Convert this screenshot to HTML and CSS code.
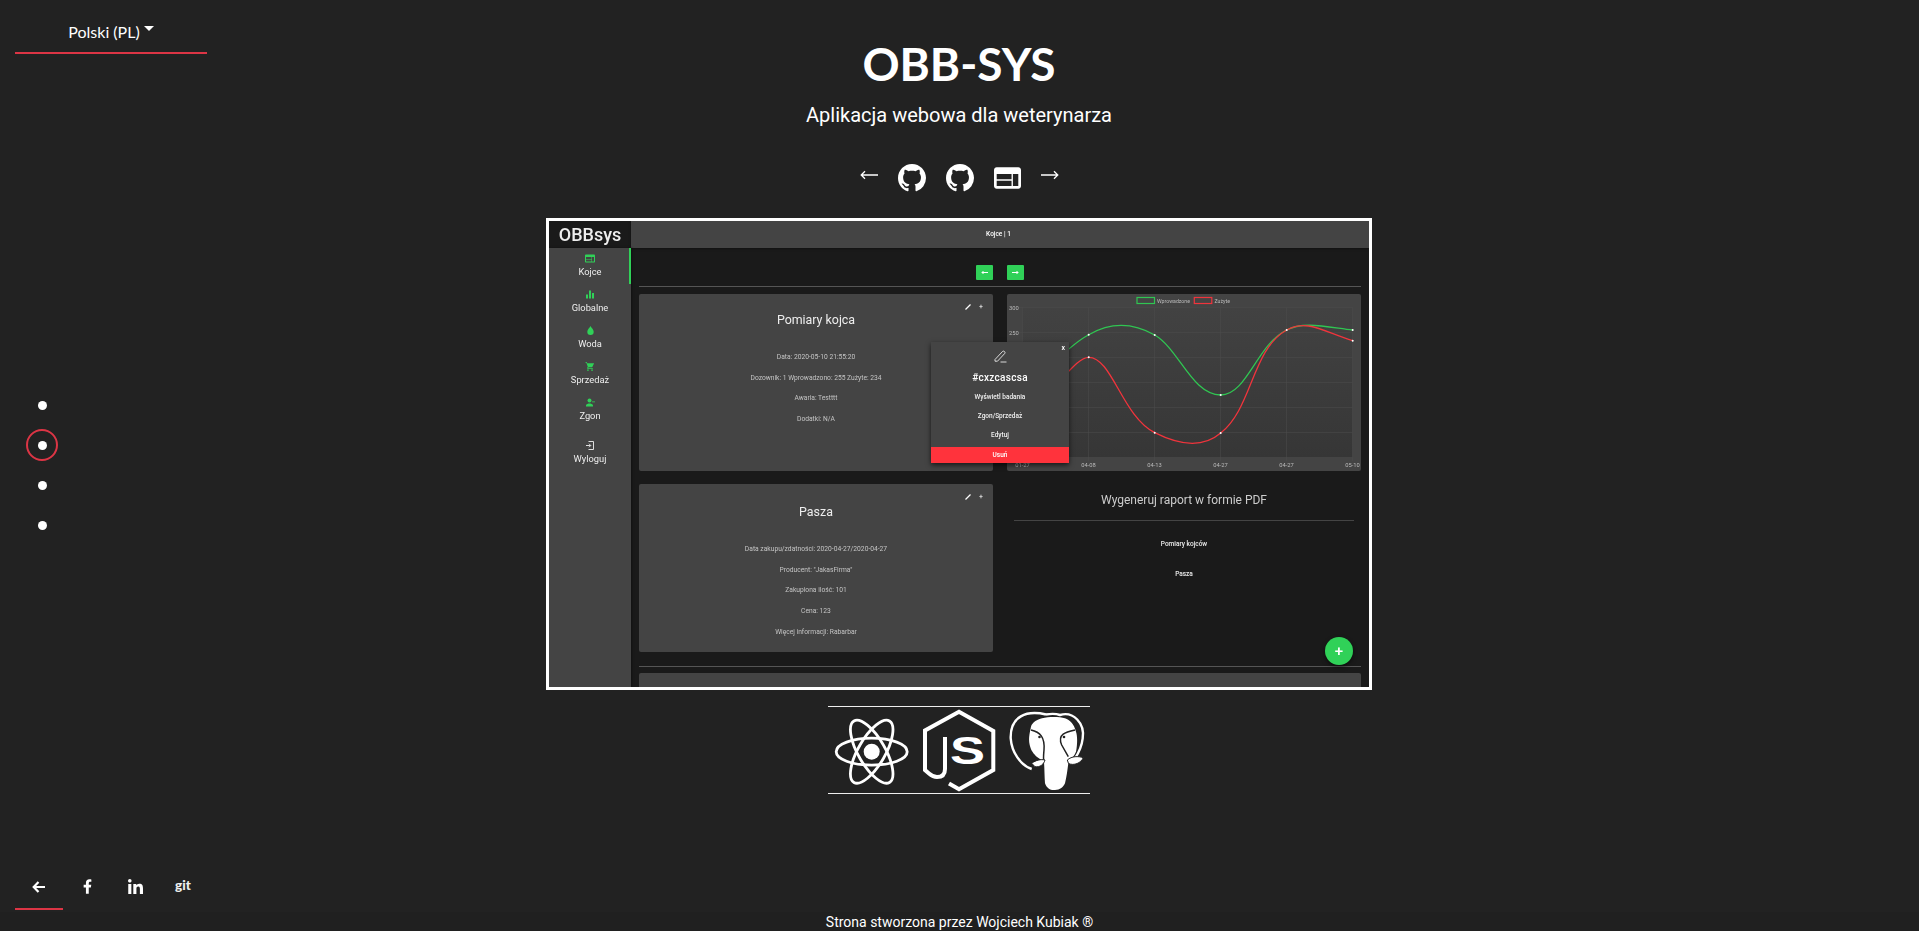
FILE: index.html
```html
<!DOCTYPE html>
<html lang="pl">
<head>
<meta charset="utf-8">
<title>OBB-SYS</title>
<link rel="stylesheet" href="styles.css">
</head>
<body>
<div class="page">
  <aside class="rail">
    <div class="lang"><span>Polski (PL)</span><i class="caret"></i></div>
    <nav class="dots">
      <div class="dot-cell"><i class="dot"></i></div>
      <div class="dot-cell active"><i class="dot"></i></div>
      <div class="dot-cell"><i class="dot"></i></div>
      <div class="dot-cell"><i class="dot"></i></div>
    </nav>
    <div class="social">
      <a class="social-item active"><svg width="14" height="12" viewBox="0 0 14 12"><path d="M13 6H2M6.5 1 1.7 6l4.8 5" fill="none" stroke="#fff" stroke-width="2.2"/></svg></a>
      <a class="social-item"><svg width="9" height="15" viewBox="0 0 320 512"><path fill="#fff" d="M279.14 288l14.22-92.66h-88.91v-60.13c0-25.35 12.42-50.06 52.24-50.06h40.42V6.26S260.43 0 225.36 0c-73.22 0-121.08 44.38-121.08 124.72v70.62H22.89V288h81.39v224h100.17V288z"/></svg></a>
      <a class="social-item"><svg width="15" height="15" viewBox="0 0 448 448"><path fill="#fff" d="M100.28 448H7.4V148.9h92.88zM53.79 108.1C24.09 108.1 0 83.5 0 53.8a53.79 53.79 0 0 1 107.58 0c0 29.7-24.1 54.3-53.79 54.3zM447.9 448h-92.68V302.4c0-34.7-.7-79.2-48.29-79.2-48.29 0-55.69 37.7-55.69 76.7V448h-92.78V148.9h89.08v40.8h1.3c12.4-23.5 42.69-48.3 87.88-48.3 94 0 111.28 61.9 111.28 142.3V448z"/></svg></a>
      <a class="social-item git">git</a>
    </div>
  </aside>

  <main class="main">
    <h1 class="title">OBB-SYS</h1>
    <h2 class="subtitle">Aplikacja webowa dla weterynarza</h2>
    <div class="links">
      <svg class="arrow" width="18" height="10" viewBox="0 0 18 10"><path d="M18 5H1.5M5 1.2 1.2 5 5 8.8" fill="none" stroke="#fff" stroke-width="1.3"/></svg>
      <svg class="gh" width="28" height="28" viewBox="0 0 16 16"><path fill="#fff" d="M8 0C3.58 0 0 3.58 0 8c0 3.54 2.29 6.53 5.47 7.59.4.07.55-.17.55-.38 0-.19-.01-.82-.01-1.49-2.01.37-2.53-.49-2.69-.94-.09-.23-.48-.94-.82-1.13-.28-.15-.68-.52-.01-.53.63-.01 1.08.58 1.23.82.72 1.21 1.87.87 2.33.66.07-.52.28-.87.51-1.07-1.78-.2-3.64-.89-3.64-3.95 0-.87.31-1.59.82-2.15-.08-.2-.36-1.02.08-2.12 0 0 .67-.21 2.2.82.64-.18 1.32-.27 2-.27.68 0 1.36.09 2 .27 1.53-1.04 2.2-.82 2.2-.82.44 1.1.16 1.92.08 2.12.51.56.82 1.27.82 2.15 0 3.07-1.87 3.75-3.65 3.95.29.25.54.73.54 1.48 0 1.07-.01 1.93-.01 2.2 0 .21.15.46.55.38A8.013 8.013 0 0016 8c0-4.42-3.58-8-8-8z"/></svg>
      <svg class="gh" width="28" height="28" viewBox="0 0 16 16"><path fill="#fff" d="M8 0C3.58 0 0 3.58 0 8c0 3.54 2.29 6.53 5.47 7.59.4.07.55-.17.55-.38 0-.19-.01-.82-.01-1.49-2.01.37-2.53-.49-2.69-.94-.09-.23-.48-.94-.82-1.13-.28-.15-.68-.52-.01-.53.63-.01 1.08.58 1.23.82.72 1.21 1.87.87 2.33.66.07-.52.28-.87.51-1.07-1.78-.2-3.64-.89-3.64-3.95 0-.87.31-1.59.82-2.15-.08-.2-.36-1.02.08-2.12 0 0 .67-.21 2.2.82.64-.18 1.32-.27 2-.27.68 0 1.36.09 2 .27 1.53-1.04 2.2-.82 2.2-.82.44 1.1.16 1.92.08 2.12.51.56.82 1.27.82 2.15 0 3.07-1.87 3.75-3.65 3.95.29.25.54.73.54 1.48 0 1.07-.01 1.93-.01 2.2 0 .21.15.46.55.38A8.013 8.013 0 0016 8c0-4.42-3.58-8-8-8z"/></svg>
      <svg class="web" width="27" height="22" viewBox="2 4 20 16"><path fill="#fff" d="M20 4H4c-1.1 0-1.99.9-1.99 2L2 18c0 1.1.9 2 2 2h16c1.1 0 2-.9 2-2V6c0-1.1-.9-2-2-2zm-5 14H4v-4h11v4zm0-5H4V9h11v4zm5 5h-4V9h4v9z"/></svg>
      <svg class="arrow" width="18" height="10" viewBox="0 0 18 10"><path d="M0 5H16.5M13 1.2 16.8 5 13 8.8" fill="none" stroke="#fff" stroke-width="1.3"/></svg>
    </div>

    <section class="shot">
      <div class="app">
        <div class="app-logo">OBBsys</div>
        <div class="app-top">Kojce | 1</div>
        <div class="app-side">
          <div class="side-item active">
            <svg width="10" height="8" viewBox="2 4 20 16"><path fill="#30d158" d="M20 4H4c-1.1 0-1.99.9-1.99 2L2 18c0 1.1.9 2 2 2h16c1.1 0 2-.9 2-2V6c0-1.1-.9-2-2-2zm-5 14H4v-4h11v4zm0-5H4V9h11v4zm5 5h-4V9h4v9z"/></svg>
            <span>Kojce</span>
          </div>
          <div class="side-item">
            <svg width="8" height="8" viewBox="0 0 8 8"><path fill="#30d158" d="M0 4h2v4H0zM3 0h2v8H3zM6 2.500h2V8H6z"/></svg>
            <span>Globalne</span>
          </div>
          <div class="side-item">
            <svg width="7" height="9" viewBox="0 0 7 9"><path fill="#30d158" d="M3.500 0C2.500 2 .3 3.500.3 5.800a3.200 3.200 0 0 0 6.400 0C6.700 3.500 4.500 2 3.500 0z"/></svg>
            <span>Woda</span>
          </div>
          <div class="side-item">
            <svg width="10" height="9" viewBox="0 0 24 22"><path fill="#30d158" d="M7 18a2 2 0 1 0 0 4 2 2 0 0 0 0-4zm10 0a2 2 0 1 0 0 4 2 2 0 0 0 0-4zM1 0v2h2l3.600 9.600-1.400 2.400C4.500 15.500 5.500 17 7 17h12v-2H7.400l1.100-2h7.500c.7 0 1.400-.4 1.700-1L22 3H5.200L4.300 0z"/></svg>
            <span>Sprzedaż</span>
          </div>
          <div class="side-item">
            <svg width="9" height="8" viewBox="0 0 18 16"><circle cx="7" cy="4" r="4" fill="#30d158"/><path fill="#30d158" d="M0 16v-2c0-2.700 4.700-4 7-4s7 1.300 7 4v2zM12 6h6v1.600h-6z"/></svg>
            <span>Zgon</span>
          </div>
          <div class="side-item logout">
            <svg width="8" height="9" viewBox="0 0 16 18"><path d="M5 1h10v16H5M0 9h9M6 5.500 9.500 9 6 12.500" fill="none" stroke="#eee" stroke-width="1.800"/></svg>
            <span>Wyloguj</span>
          </div>
        </div>
        <div class="app-main">
          <div class="app-nav">
            <span class="mini-btn"><svg width="7" height="5" viewBox="0 0 7 5"><path d="M7 2.500H1M2.500 1 1 2.500 2.500 4" fill="none" stroke="#fff"/></svg></span>
            <span class="mini-btn"><svg width="7" height="5" viewBox="0 0 7 5"><path d="M0 2.500H6M4.500 1 6 2.500 4.500 4" fill="none" stroke="#fff"/></svg></span>
          </div>
          <div class="rule"></div>
          <div class="app-grid">
            <article class="card">
              <div class="card-tools"><svg width="6" height="6" viewBox="0 0 6 6"><path d="M.5 5.500 5.500.500" stroke="#fff" stroke-width="1.300"/></svg><span>+</span></div>
              <h3>Pomiary kojca</h3>
              <p>Data: 2020-05-10 21:55:20</p>
              <p>Dozownik: 1 Wprowadzono: 255 Zużyte: 234</p>
              <p>Awaria: Testttt</p>
              <p>Dodatki: N/A</p>
            </article>
            <div class="chart">
              <svg width="354" height="177" viewBox="0 0 354 177">
                <defs>
                  <linearGradient id="plot" x1="0" y1="0" x2="0" y2="1"><stop offset="0" stop-color="#424242"/><stop offset="1" stop-color="#363636"/></linearGradient>
                </defs>
                <rect x="15.500" y="13.500" width="330" height="150" fill="url(#plot)"/>
                <g class="grid-lines">
                  <path d="M15.500 13.500V167M81.500 13.500V167M147.500 13.500V167M213.500 13.500V167M279.500 13.500V167M345.500 13.500V167"/>
                  <path d="M11 13.500H345.500M11 38.500H345.500M11 63.500H345.500M11 88.500H345.500M11 113.500H345.500M11 138.500H345.500M11 163.500H345.500"/>
                </g>
                <rect x="130" y="3.500" width="17.500" height="6" fill="none" stroke="#30c552" stroke-width="1.200"/>
                <text x="150" y="9" class="legend">Wprowadzone</text>
                <rect x="187.300" y="3.500" width="17.500" height="6" fill="none" stroke="#f0343c" stroke-width="1.200"/>
                <text x="207.500" y="9" class="legend">Zużyte</text>
                <text x="2" y="15.500" class="tick">300</text>
                <text x="2" y="40.500" class="tick">250</text>
                <g class="tick-x">
                  <text x="15.500" y="172.500">01-27</text>
                  <text x="81.500" y="172.500">04-08</text>
                  <text x="147.500" y="172.500">04-13</text>
                  <text x="213.500" y="172.500">04-27</text>
                  <text x="279.500" y="172.500">04-27</text>
                  <text x="345.500" y="172.500">05-10</text>
                </g>
                <path d="M40 76C60 55 72 46 81.700 40.700C102 29 125 28 147.700 41C172 55 185 101 213.700 101C240 101 250 50 279.700 36C296 27 320 33 345.700 36" fill="none" stroke="#30c552" stroke-width="1.300"/>
                <path d="M45 95C60 80 72 63.300 81.700 63.300C105 63.300 115 122 147.700 138.700C170 150 195 155 213.700 139C245 115 245 55 279.700 36C300 25 315 37 345.700 46.700" fill="none" stroke="#f0343c" stroke-width="1.300"/>
                <g fill="#fff">
                  <circle cx="81.700" cy="40.700" r="1"/><circle cx="147.700" cy="41" r="1"/><circle cx="213.700" cy="101" r="1"/><circle cx="279.700" cy="36" r="1"/><circle cx="345.700" cy="36" r="1"/>
                  <circle cx="81.700" cy="63.300" r="1"/><circle cx="147.700" cy="138.700" r="1"/><circle cx="213.700" cy="139" r="1"/><circle cx="345.700" cy="46.700" r="1"/>
                </g>
              </svg>
            </div>
            <article class="card card-low">
              <div class="card-tools"><svg width="6" height="6" viewBox="0 0 6 6"><path d="M.5 5.500 5.500.500" stroke="#fff" stroke-width="1.300"/></svg><span>+</span></div>
              <h3>Pasza</h3>
              <p>Data zakupu/zdatności: 2020-04-27/2020-04-27</p>
              <p>Producent: "JakasFirma"</p>
              <p>Zakupiona ilość: 101</p>
              <p>Cena: 123</p>
              <p>Więcej informacji: Rabarbar</p>
            </article>
            <div class="report">
              <h4>Wygeneruj raport w formie PDF</h4>
              <div class="report-rule"></div>
              <p>Pomiary kojców</p>
              <p>Pasza</p>
            </div>
          </div>
          <div class="rule rule-low"></div>
          <div class="card card-stub"></div>
        </div>
        <button class="fab">+</button>
        <div class="popup">
          <span class="popup-x">x</span>
          <svg width="14" height="14" viewBox="0 0 14 14"><path d="M2 10.500 9.500 2.500a1.500 1.500 0 0 1 2.200 2L4.500 12.200H2zM7.500 13h6" fill="none" stroke="#fff" stroke-width=".8"/></svg>
          <strong>#cxzcascsa</strong>
          <a>Wyświetl badania</a>
          <a>Zgon/Sprzedaż</a>
          <a>Edytuj</a>
          <a class="danger">Usuń</a>
        </div>
      </div>
    </section>

    <div class="stack">
      <div class="stack-cell first">
        <svg width="88" height="88" viewBox="0 0 88 88">
          <g fill="none" stroke="#fff" stroke-width="2.800" transform="translate(43.700 45.700)">
            <ellipse rx="35.500" ry="13.500"/>
            <ellipse rx="35.500" ry="13.500" transform="rotate(60)"/>
            <ellipse rx="35.500" ry="13.500" transform="rotate(120)"/>
          </g>
          <circle cx="43.700" cy="45.700" r="8" fill="#fff"/>
        </svg>
      </div>
      <div class="stack-cell">
        <svg width="88" height="88" viewBox="0 0 88 88">
          <path d="M31 31V63q0 8-8 8q-4 0-8-3.500L11 64V24.500L45 5.700 79.300 25V64L45 83.300 35 77.500" fill="none" stroke="#fff" stroke-width="4"/>
          <text x="36" y="57.500" class="js" textLength="35" lengthAdjust="spacingAndGlyphs">S</text>
        </svg>
      </div>
      <div class="stack-cell">
        <svg width="88" height="88" viewBox="0 0 88 88">
          <path d="M44 8.500C24.700 4 8 10 8.700 32.300 9.700 45.700 18 59 29.700 63" fill="none" stroke="#fff" stroke-width="2.400"/>
          <path d="M44 8.500C50 7.500 55 8 58 9 71.300 5 83 17.300 80.700 32.300 79.700 40.700 76.300 47.300 73 52.300" fill="none" stroke="#fff" stroke-width="2.400"/>
          <path d="M40 12.300C33 14 29 18 28.700 22.300 27 30 26.500 34 27.700 39 29 45 32 48 34.700 50.700L42 55.700C42.500 63 42.500 71 43 77.300 45 83 49 84.500 53 84 58 84 61.500 81 63 77.300 64.500 71 65.500 64 66.300 57.300 69 53 72.500 50 74 45.700 75.500 38 75.500 30 74 25.700 72 18 68 14 63 12.300 57 10.500 47 10.500 40 12.300Z" fill="#fff"/>
          <path d="M29 24C38 26 43 31 42 44 41.700 48 41 52 42 55.700M73 24C64 26 55 28 59.700 39L66.300 50.700" fill="none" stroke="#222" stroke-width="1.500"/>
          <circle cx="37.500" cy="31" r="1.300" fill="#222"/>
          <circle cx="62" cy="31" r="1.300" fill="#222"/>
          <path d="M29.700 57.300C34 54 39 53 43 54 42 58 38 61.700 33 60.700ZM65.300 54C70 50 76 50 81.300 51.700 79 57 72 60 66.500 57.500Z" fill="#fff" stroke="#222" stroke-width="1"/>
        </svg>
      </div>
    </div>
  </main>
  <div class="spacer"></div>
</div>
<footer class="footer">Strona stworzona przez Wojciech Kubiak ®</footer>
</body>
</html>
```

FILE: styles.css
```css
* { box-sizing: border-box; }
html, body { margin: 0; height: 100%; }
body {
  background: #222;
  color: #fff;
  font-family: Roboto, "Liberation Sans", sans-serif;
  display: flex;
  flex-direction: column;
  height: 931px;
  overflow: hidden;
}
.page {
  flex: 1;
  display: grid;
  grid-template-columns: 546px 826px 1fr;
  min-height: 0;
}
.rail {
  display: grid;
  grid-template-rows: auto 1fr auto;
  padding: 0 0 2px 15px;
  width: 192px;
}
.lang {
  font-family: Lato, sans-serif;
  font-size: 16px;
  height: 54px;
  border-bottom: 2px solid #dc3545;
  display: flex;
  justify-content: center;
  align-items: center;
  gap: 4px;
  padding-top: 10px;
}
.caret {
  width: 0;
  height: 0;
  border-top: 5px solid #fff;
  border-left: 5px solid transparent;
  border-right: 5px solid transparent;
  margin-bottom: 5px;
}
.dots {
  display: flex;
  flex-direction: column;
  gap: 8px;
  padding-top: 335px;
  margin-left: 11px;
}
.dot-cell {
  width: 32px;
  height: 32px;
  display: flex;
  align-items: center;
  justify-content: center;
  border-radius: 50%;
  border: 2px solid transparent;
}
.dot-cell.active { border-color: #dc3545; }
.dot { width: 9px; height: 9px; background: #fff; border-radius: 50%; }
.social { display: flex; }
.social-item {
  width: 48px;
  height: 45px;
  display: flex;
  align-items: center;
  justify-content: center;
  border-bottom: 2px solid transparent;
}
.social-item.active { border-bottom-color: #dc3545; }
.git { font-family: Lato, sans-serif; font-weight: 900; font-size: 13.5px; color: #eee; padding-bottom: 4px; }

.main { display: flex; flex-direction: column; align-items: center; }
.title {
  margin: 0;
  padding-top: 36px;
  font-family: Lato, sans-serif;
  font-weight: 700;
  font-size: 46px;
  line-height: 56px;
}
.subtitle {
  margin: 0;
  padding-top: 9px;
  font-weight: 400;
  font-size: 20px;
  line-height: 28px;
}
.links {
  margin-top: 35px;
  height: 28px;
  display: flex;
  align-items: center;
  gap: 20px;
}
.links .arrow { margin-top: -6px; }
.links .web { margin-top: -1px; }
.shot {
  margin-top: 26px;
  width: 826px;
  height: 472px;
  border: 3px solid #fff;
  flex: none;
  overflow: hidden;
}
.app {
  position: relative;
  width: 820px;
  height: 466px;
  background: #1a1a1a;
  display: grid;
  grid-template-columns: 82px 1fr;
  grid-template-rows: 27px 1fr;
  overflow: hidden;
  filter: blur(.4px);
}
.app-logo {
  background: #1a1a1a;
  font-size: 18px;
  font-weight: 500;
  color: #eee;
  display: flex;
  align-items: center;
  justify-content: center;
}
.app-top {
  background: #444;
  font-size: 6.500px;
  font-weight: 500;
  text-align: center;
  line-height: 26px;
  padding-right: 3px;
  box-shadow: 0 1px 2px #111;
}
.app-side { background: #444; box-shadow: 1px 0 2px #111; z-index: 1; }
.side-item {
  height: 36px;
  display: flex;
  flex-direction: column;
  align-items: center;
  justify-content: flex-start;
  padding-top: 6px;
  font-size: 9.300px;
  color: #eee;
  gap: 3px;
}
.side-item svg { height: 9px; }
.side-item.active { box-shadow: inset -2px 0 #30d158; }
.side-item.logout { margin-top: 7px; }
.app-main { padding: 0 8px; overflow: hidden; min-width: 0; }
.app-nav {
  height: 38px;
  display: flex;
  justify-content: center;
  gap: 14px;
  padding: 17px 0 0 0;
}
.mini-btn {
  width: 17px;
  height: 15px;
  background: #30d158;
  border-radius: 1px;
  display: flex;
  align-items: center;
  justify-content: center;
}
.rule { height: 1px; background: #555; border-top: 0; }
.app-grid {
  margin-top: 7px;
  display: grid;
  grid-template-columns: 354px 354px;
  grid-template-rows: 177px 168px;
  column-gap: 14px;
  row-gap: 13px;
}
.card {
  position: relative;
  background: #444;
  border-radius: 2px;
  text-align: center;
  padding-top: 18px;
  color: #c4c4c4;
}
.card-low { padding-top: 20px; }
.card h3 {
  margin: 0 0 19px;
  font-size: 12.400px;
  font-weight: 400;
  line-height: 16px;
  color: #eee;
}
.card p { margin: 0; font-size: 6.700px; line-height: 20.700px; }
.card-tools {
  position: absolute;
  top: 9px;
  right: 10px;
  display: flex;
  align-items: center;
  gap: 8px;
  font-size: 7px;
  line-height: 8px;
  color: #fff;
}
.chart { background: #444; border-radius: 2px; overflow: hidden; }
.chart svg { display: block; }
.grid-lines path { stroke: #4c4c4c; stroke-width: 1; fill: none; opacity: .5; }
.tick { font-size: 5.800px; fill: #bbb; }
.legend { font-size: 5.200px; fill: #bbb; }
.tick-x text { font-size: 5.800px; fill: #bbb; text-anchor: middle; }
.report { text-align: center; }
.report h4 {
  margin: 0;
  font-size: 12px;
  font-weight: 400;
  color: #ccc;
  line-height: 16px;
  padding-top: 8px;
}
.report-rule { height: 1px; background: #444; margin: 12px 7px 0; }
.report p { margin: 0; font-size: 6.500px; line-height: 30px; font-weight: 500; color: #eee; }
.report-rule + p { margin-top: 8px; }
.rule-low { margin-top: 14px; }
.card-stub { height: 40px; margin-top: 6px; }
.fab {
  position: absolute;
  right: 16px;
  bottom: 22px;
  width: 28px;
  height: 28px;
  padding: 0;
  border: 0;
  border-radius: 50%;
  background: #30d158;
  color: #fff;
  font: 500 15px/28px Roboto, sans-serif;
  box-shadow: 0 2px 4px #0008;
}
.popup {
  position: absolute;
  left: 382px;
  top: 121px;
  width: 138px;
  height: 121px;
  background: #444;
  box-shadow: 0 2px 5px #000a;
  display: flex;
  flex-direction: column;
  align-items: center;
  padding-top: 7px;
  z-index: 2;
  font-size: 6.500px;
  font-weight: 500;
}
.popup-x { position: absolute; top: 2px; right: 4px; font-size: 7px; line-height: 8px; }
.popup strong { font-size: 10px; font-weight: 500; line-height: 12px; margin-top: 9px; letter-spacing: .3px; }
.popup a { line-height: 19px; margin-top: 0; color: #f0f0f0; }
.popup strong + a { margin-top: 4px; }
.popup .danger {
  position: absolute;
  left: 0;
  right: 0;
  bottom: 0;
  height: 16px;
  line-height: 16px;
  background: #ff333c;
  text-align: center;
  color: #fff;
}
.stack {
  margin-top: 16px;
  display: flex;
  flex: none;
  border-top: 1px solid #eee;
  border-bottom: 1px solid #eee;
}
.stack-cell { width: 88px; height: 87px; margin-top: -1px; }
.stack-cell.first { width: 86px; }
.stack-cell svg { display: block; }
.js { font-family: "Liberation Sans", sans-serif; font-weight: 700; font-size: 38px; fill: #fff; }
.footer {
  flex: none;
  height: 19px;
  background: #202020;
  text-align: center;
  font-size: 14px;
  line-height: 21px;
  overflow: hidden;
}
```
